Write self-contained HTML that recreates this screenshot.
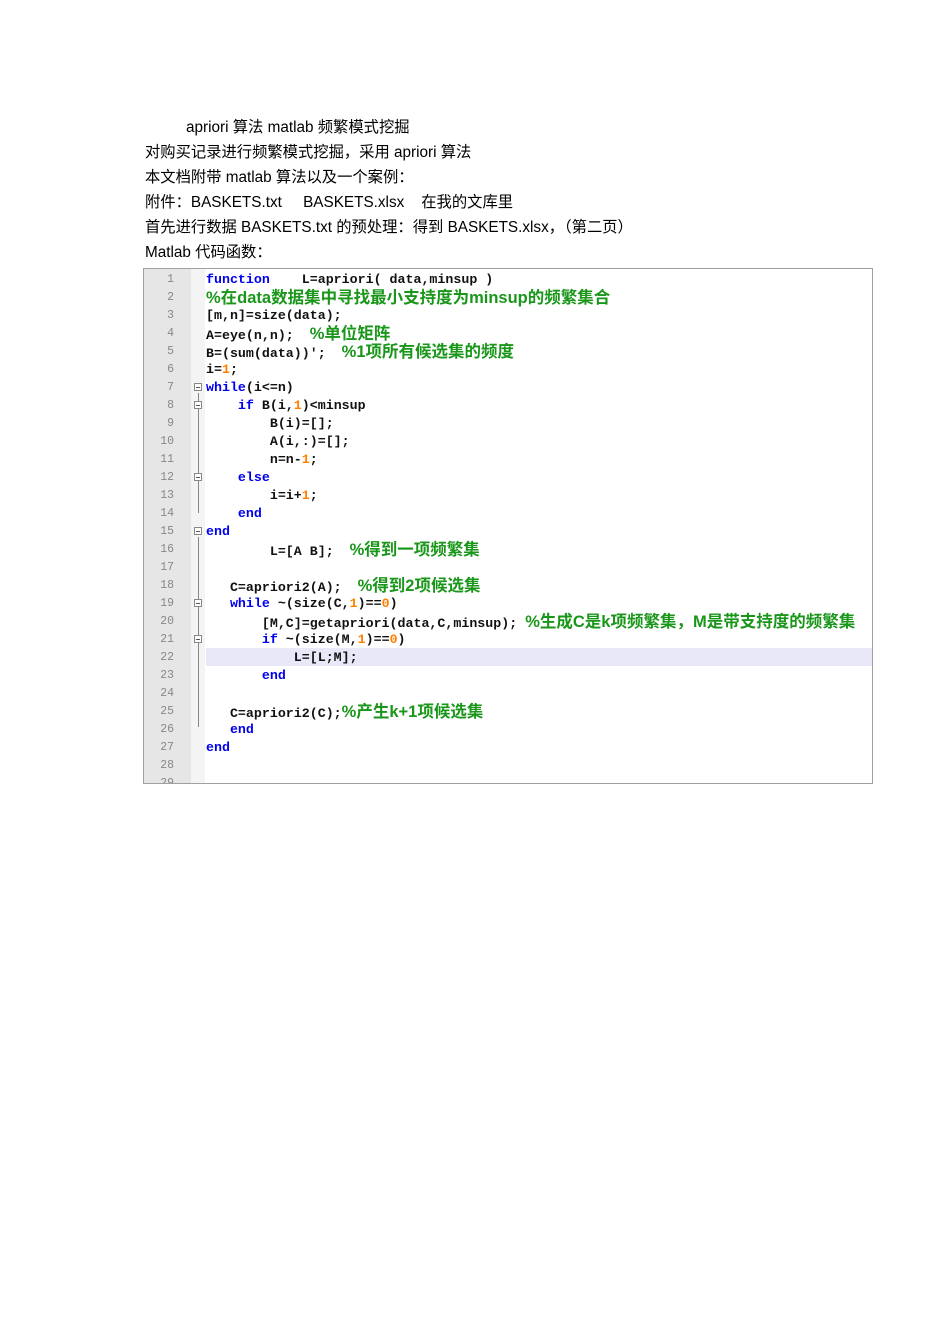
<!DOCTYPE html>
<html><head><meta charset="utf-8"><style>
body{margin:0;width:950px;height:1344px;background:#fff;position:relative;font-family:"Liberation Sans","Noto Sans CJK SC",sans-serif;}
.t{position:absolute;left:145px;font-size:15.3px;color:#000;white-space:pre;line-height:20px}
#box{position:absolute;left:143px;top:268px;width:728px;height:514px;border:1px solid #a0a0a0;background:#fff;overflow:hidden}
#gut{position:absolute;left:0;top:0;width:47px;height:100%;background:#e6e6e6}
#fold{position:absolute;left:47px;top:0;width:14px;height:100%;background:#f4f4f4}
.n{position:absolute;left:0;width:30px;text-align:right;font-family:"Liberation Mono",monospace;font-size:11.5px;color:#888;line-height:18px}
.c{position:absolute;left:62px;white-space:pre;font-family:"Liberation Mono",monospace;font-size:13.3px;line-height:18px;color:#111;font-weight:bold}
.k{color:#0000ee}.g{color:#1a961a;font-family:"Liberation Sans","Noto Sans CJK SC",sans-serif;font-size:16.5px;font-weight:bold}.o{color:#ff8000}
.fb{position:absolute;left:50px;width:8px;height:8px;border:1px solid #888;background:#fff;box-sizing:border-box}
.fb:after{content:"";position:absolute;left:1px;top:3px;width:4px;height:1px;background:#555}
.vl{position:absolute;left:54px;width:1px;background:#888}
</style></head><body>
<div class="t" style="left:186px;top:118px">apriori 算法 matlab 频繁模式挖掘</div>
<div class="t" style="top:143px">对购买记录进行频繁模式挖掘，采用 apriori 算法</div>
<div class="t" style="top:168px">本文档附带 matlab 算法以及一个案例：</div>
<div class="t" style="top:193px">附件：BASKETS.txt     BASKETS.xlsx    在我的文库里</div>
<div class="t" style="top:218px">首先进行数据 BASKETS.txt 的预处理：得到 BASKETS.xlsx，（第二页）</div>
<div class="t" style="top:243px">Matlab 代码函数：</div>
<div id="box">
<div id="gut"></div><div id="fold"></div>
<div style="position:absolute;left:62px;top:379px;width:670px;height:18px;background:#e8e8f8"></div>
<div class="vl" style="top:124px;height:120px"></div>
<div class="vl" style="top:268px;height:190px"></div>
<div class="fb" style="top:114px"></div><div class="fb" style="top:132px"></div><div class="fb" style="top:204px"></div>
<div class="fb" style="top:258px"></div><div class="fb" style="top:330px"></div><div class="fb" style="top:366px"></div>
<div class="n" style="top:2px">1</div><div class="n" style="top:20px">2</div><div class="n" style="top:38px">3</div><div class="n" style="top:56px">4</div><div class="n" style="top:74px">5</div><div class="n" style="top:92px">6</div><div class="n" style="top:110px">7</div><div class="n" style="top:128px">8</div><div class="n" style="top:146px">9</div><div class="n" style="top:164px">10</div><div class="n" style="top:182px">11</div><div class="n" style="top:200px">12</div><div class="n" style="top:218px">13</div><div class="n" style="top:236px">14</div><div class="n" style="top:254px">15</div><div class="n" style="top:272px">16</div><div class="n" style="top:290px">17</div><div class="n" style="top:308px">18</div><div class="n" style="top:326px">19</div><div class="n" style="top:344px">20</div><div class="n" style="top:362px">21</div><div class="n" style="top:380px">22</div><div class="n" style="top:398px">23</div><div class="n" style="top:416px">24</div><div class="n" style="top:434px">25</div><div class="n" style="top:452px">26</div><div class="n" style="top:470px">27</div><div class="n" style="top:488px">28</div><div class="n" style="top:506px">29</div>
<div class="c" style="top:2px"><span class="k">function</span>    L=apriori( data,minsup )</div>
<div class="c" style="top:20px"><span class="g">%在data数据集中寻找最小支持度为minsup的频繁集合</span></div>
<div class="c" style="top:38px">[m,n]=size(data);</div>
<div class="c" style="top:56px">A=eye(n,n);  <span class="g">%单位矩阵</span></div>
<div class="c" style="top:74px">B=(sum(data))';  <span class="g">%1项所有候选集的频度</span></div>
<div class="c" style="top:92px">i=<span class="o">1</span>;</div>
<div class="c" style="top:110px"><span class="k">while</span>(i&lt;=n)</div>
<div class="c" style="top:128px">    <span class="k">if</span> B(i,<span class="o">1</span>)&lt;minsup</div>
<div class="c" style="top:146px">        B(i)=[];</div>
<div class="c" style="top:164px">        A(i,:)=[];</div>
<div class="c" style="top:182px">        n=n-<span class="o">1</span>;</div>
<div class="c" style="top:200px">    <span class="k">else</span></div>
<div class="c" style="top:218px">        i=i+<span class="o">1</span>;</div>
<div class="c" style="top:236px">    <span class="k">end</span></div>
<div class="c" style="top:254px"><span class="k">end</span></div>
<div class="c" style="top:272px">        L=[A B];  <span class="g">%得到一项频繁集</span></div>
<div class="c" style="top:308px">   C=apriori2(A);  <span class="g">%得到2项候选集</span></div>
<div class="c" style="top:326px">   <span class="k">while</span> ~(size(C,<span class="o">1</span>)==<span class="o">0</span>)</div>
<div class="c" style="top:344px">       [M,C]=getapriori(data,C,minsup); <span class="g">%生成C是k项频繁集，M是带支持度的频繁集</span></div>
<div class="c" style="top:362px">       <span class="k">if</span> ~(size(M,<span class="o">1</span>)==<span class="o">0</span>)</div>
<div class="c" style="top:380px">           L=[L;M];</div>
<div class="c" style="top:398px">       <span class="k">end</span></div>
<div class="c" style="top:434px">   C=apriori2(C);<span class="g">%产生k+1项候选集</span></div>
<div class="c" style="top:452px">   <span class="k">end</span></div>
<div class="c" style="top:470px"><span class="k">end</span></div>
</div>
</body></html>
